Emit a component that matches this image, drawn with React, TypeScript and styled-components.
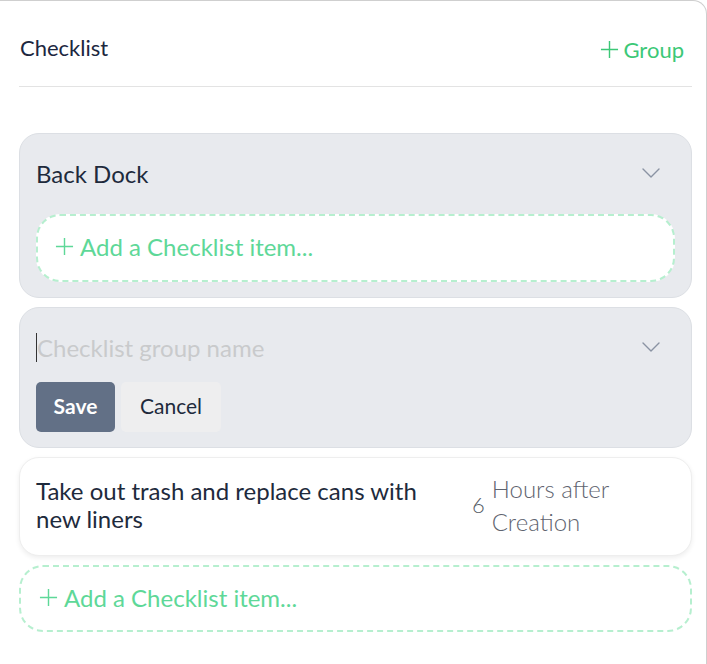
import styled, { createGlobalStyle } from 'styled-components';

const GlobalStyle = createGlobalStyle`
  html, body {
    margin: 0;
    padding: 0;
    background: #ffffff;
  }
  body {
    font-family: Lato, "Open Sans", sans-serif;
    color: #1f2a3d;
  }
  * {
    box-sizing: border-box;
  }
`;

const Chevron = () => (
  <svg width="20" height="12" viewBox="0 0 20 12" fill="none">
    <path d="M2 2l8 8 8-8" stroke="#8a93a3" strokeWidth="1.4" strokeLinecap="round" strokeLinejoin="round" />
  </svg>
);

const Plus = ({ size = 20 }: { size?: number }) => (
  <svg width={size} height={size} viewBox="0 0 20 20" fill="none">
    <path d="M10 1v18M1 10h18" stroke="currentColor" strokeWidth="1.5" />
  </svg>
);

const App = () => {
  return (
    <>
      <GlobalStyle />
      <Panel>
        <Header>
          <Title>Checklist</Title>
          <GroupLink>
            <Plus size={19} />
            Group
          </GroupLink>
        </Header>
        <List>
          <GroupCard>
            <GroupHead>
              <GroupName>Back Dock</GroupName>
              <Chevron />
            </GroupHead>
            <AddItem inset>
              <Plus size={19} />
              Add a Checklist item...
            </AddItem>
          </GroupCard>

          <GroupCard editing>
            <GroupHead>
              <NameInput placeholder="Checklist group name" autoFocus />
              <Chevron />
            </GroupHead>
            <Actions>
              <SaveButton>Save</SaveButton>
              <CancelButton>Cancel</CancelButton>
            </Actions>
          </GroupCard>

          <ItemCard>
            <ItemText>Take out trash and replace cans with new liners</ItemText>
            <Due>
              <DueValue>6</DueValue>
              <DueLabel>
                Hours after
                <br />
                Creation
              </DueLabel>
            </Due>
          </ItemCard>

          <AddItem>
            <Plus size={19} />
            Add a Checklist item...
          </AddItem>
        </List>
      </Panel>
    </>
  );
};

const Panel = styled.div`
  width: 707px;
  height: 664px;
  border-top: 1px solid #cfcfcf;
  border-right: 1px solid #cfcfcf;
  border-top-right-radius: 14px;
  padding: 0 14px 0 19px;
`;

const Header = styled.div`
  display: flex;
  align-items: center;
  justify-content: space-between;
  height: 86px;
  padding: 7px 8px 0 1px;
  border-bottom: 1px solid #e3e3e3;
`;

const Title = styled.h1`
  margin: 0;
  font-size: 22px;
  font-weight: 400;
  color: #1c2740;
`;

const GroupLink = styled.button`
  display: flex;
  align-items: center;
  gap: 4px;
  border: none;
  background: none;
  padding: 4px 0 0;
  font-family: inherit;
  font-size: 22px;
  color: #3cc877;
  cursor: pointer;
`;

const List = styled.div`
  display: flex;
  flex-direction: column;
  gap: 9px;
  padding-top: 46px;
`;

const GroupCard = styled.div<{ editing?: boolean }>`
  display: flex;
  flex-direction: column;
  gap: ${({ editing }) => (editing ? '12px' : '18px')};
  padding: 20px 16px 15px 16px;
  background: #e8eaee;
  border: 1px solid #dcdfe4;
  border-radius: 20px;
`;

const GroupHead = styled.div`
  display: flex;
  align-items: center;
  justify-content: space-between;
  height: 42px;
  padding: 0 14px 4px 0;
`;

const GroupName = styled.div`
  font-size: 24px;
  color: #1e2a3c;
`;

const NameInput = styled.input`
  flex: 1;
  border: none;
  background: transparent;
  outline: none;
  padding: 0;
  font-family: inherit;
  font-size: 24px;
  color: #1e2a3c;
  caret-color: #333;
  border-left: 1.5px solid #333;
  &::placeholder {
    color: #c9cacc;
  }
`;

const Actions = styled.div`
  display: flex;
  gap: 6px;
`;

const BaseButton = styled.button`
  height: 50px;
  padding: 0 0 3px;
  border: none;
  border-radius: 5px;
  font-family: inherit;
  font-size: 21px;
  cursor: pointer;
`;

const SaveButton = styled(BaseButton)`
  width: 79px;
  background: #627086;
  color: #ffffff;
  font-weight: 700;
`;

const CancelButton = styled(BaseButton)`
  width: 100px;
  background: #eeeeef;
  color: #1e2a3c;
`;

const AddItem = styled.div<{ inset?: boolean }>`
  display: flex;
  align-items: center;
  gap: 6px;
  height: ${({ inset }) => (inset ? '68px' : '67px')};
  padding-left: ${({ inset }) => (inset ? '17px' : '18px')};
  padding-bottom: 3px;
  background: #ffffff;
  border: 2px dashed #b6efcf;
  border-radius: 24px;
  font-size: 24px;
  color: #5ed898;
  cursor: pointer;
`;

const ItemCard = styled.div`
  display: flex;
  align-items: center;
  justify-content: space-between;
  height: 99px;
  padding: 0 16px 4px 16px;
  background: #ffffff;
  border: 1px solid #eeeeee;
  border-radius: 20px;
  box-shadow: 0 2px 5px rgba(0, 0, 0, 0.07);
`;

const ItemText = styled.div`
  width: 410px;
  font-size: 24px;
  line-height: 28px;
  color: #1e2a3c;
`;

const Due = styled.div`
  display: flex;
  align-items: center;
  gap: 7px;
  width: 203px;
`;

const DueValue = styled.span`
  font-size: 22px;
  font-weight: 300;
  color: #555b66;
`;

const DueLabel = styled.span`
  font-size: 24px;
  font-weight: 300;
  line-height: 33px;
  color: #5f6470;
`;

export default App;
